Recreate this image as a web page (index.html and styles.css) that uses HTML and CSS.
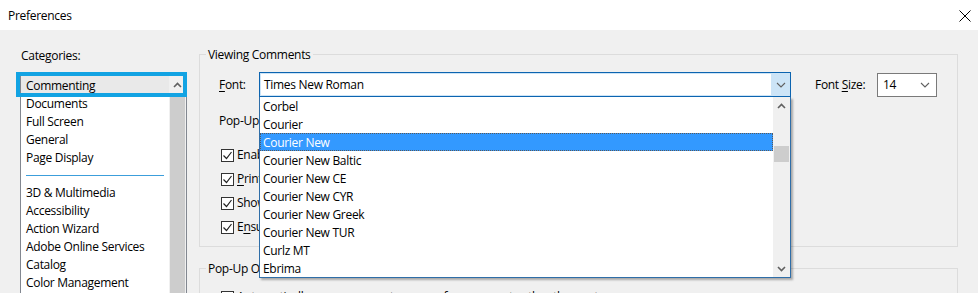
FILE: index.html
```html
<!DOCTYPE html>
<html lang="en">
<head>
    <meta charset="UTF-8">
    <meta name="viewport" content="width=device-width, initial-scale=1.0">
    <title>Preferences</title>
    <link rel="stylesheet" href="styles.css">
</head>
<body>
    <div class="window">
        <div class="titlebar">
            <span class="title">Preferences</span>
            <svg class="close" width="12" height="12" viewBox="0 0 12 12">
                <path d="M0.5 0.5 L11.5 11.5 M11.5 0.5 L0.5 11.5" stroke="#000" stroke-width="1" fill="none"/>
            </svg>
        </div>
        <div class="content">
            <div class="sidebar">
                <div class="sidebar-label">Cate<u>g</u>ories:</div>
                <div class="listbox">
                    <div class="list-items">
                        <div class="item current">Commenting</div>
                        <div class="item">Documents</div>
                        <div class="item">Full Screen</div>
                        <div class="item">General</div>
                        <div class="item">Page Display</div>
                        <div class="separator"></div>
                        <div class="item">3D &amp; Multimedia</div>
                        <div class="item">Accessibility</div>
                        <div class="item">Action Wizard</div>
                        <div class="item">Adobe Online Services</div>
                        <div class="item">Catalog</div>
                        <div class="item">Color Management</div>
                    </div>
                    <div class="list-scroll">
                        <div class="scroll-btn">
                            <svg width="9" height="6" viewBox="0 0 9 6"><path d="M1 5 L4.5 1.5 L8 5" stroke="#606060" stroke-width="1.6" fill="none"/></svg>
                        </div>
                        <div class="list-thumb"></div>
                    </div>
                    <div class="focus-ring"></div>
                </div>
            </div>

            <div class="panel">
                <fieldset class="group">
                    <legend>Viewing Comments</legend>
                    <div class="group-body">
                        <div class="font-row">
                            <span class="label font-label"><u>F</u>ont:</span>
                            <div class="combo font-combo">
                                <span class="combo-value">Times New Roman</span>
                                <span class="combo-btn">
                                    <svg width="10" height="6" viewBox="0 0 10 6"><path d="M1 1 L5 5 L9 1" stroke="#606060" stroke-width="1.1" fill="none"/></svg>
                                </span>
                                <div class="dropdown">
                                    <div class="options">
                                        <div class="option">Corbel</div>
                                        <div class="option">Courier</div>
                                        <div class="option selected">Courier New</div>
                                        <div class="option">Courier New Baltic</div>
                                        <div class="option">Courier New CE</div>
                                        <div class="option">Courier New CYR</div>
                                        <div class="option">Courier New Greek</div>
                                        <div class="option">Courier New TUR</div>
                                        <div class="option">Curlz MT</div>
                                        <div class="option">Ebrima</div>
                                    </div>
                                    <div class="drop-scroll">
                                        <div class="arrow">
                                            <svg width="9" height="6" viewBox="0 0 9 6"><path d="M1 5 L4.5 1.5 L8 5" stroke="#606060" stroke-width="1.6" fill="none"/></svg>
                                        </div>
                                        <div class="drop-thumb"></div>
                                        <div class="arrow bottom">
                                            <svg width="9" height="6" viewBox="0 0 9 6"><path d="M1 1 L4.5 4.5 L8 1" stroke="#606060" stroke-width="1.6" fill="none"/></svg>
                                        </div>
                                    </div>
                                </div>
                            </div>
                            <span class="label size-label">Font <u>S</u>ize:</span>
                            <div class="combo size-combo">
                                <span class="size-value">14</span>
                                <svg width="10" height="6" viewBox="0 0 10 6"><path d="M1 1 L5 5 L9 1" stroke="#606060" stroke-width="1.1" fill="none"/></svg>
                            </div>
                        </div>
                        <div class="opacity-row">Pop-Up Opacity:</div>
                        <div class="checks">
                            <div class="check"><span class="box"><svg width="11" height="11" viewBox="0 0 11 11"><path d="M1.5 5.5 L4.5 8.5 L9.5 2" stroke="#222" stroke-width="1.2" fill="none"/></svg></span>Enable text indicators and tooltips</div>
                            <div class="check"><span class="box"><svg width="11" height="11" viewBox="0 0 11 11"><path d="M1.5 5.5 L4.5 8.5 L9.5 2" stroke="#222" stroke-width="1.2" fill="none"/></svg></span><u>P</u>rint notes and pop-ups</div>
                            <div class="check"><span class="box"><svg width="11" height="11" viewBox="0 0 11 11"><path d="M1.5 5.5 L4.5 8.5 L9.5 2" stroke="#222" stroke-width="1.2" fill="none"/></svg></span>Show lines connecting comment markups to their pop-ups on mouse rollover</div>
                            <div class="check"><span class="box"><svg width="11" height="11" viewBox="0 0 11 11"><path d="M1.5 5.5 L4.5 8.5 L9.5 2" stroke="#222" stroke-width="1.2" fill="none"/></svg></span>E<u>n</u>sure that pop-ups are visible as the document is scrolled</div>
                        </div>
                    </div>
                </fieldset>

                <fieldset class="group second">
                    <legend>Pop-Up Open Behavior</legend>
                    <div class="group-body">
                        <div class="check"><span class="box"></span>Automatically open comment pop-ups for comments other than notes</div>
                    </div>
                </fieldset>
            </div>
        </div>
    </div>
</body>
</html>
```

FILE: styles.css
```css
html, body {
    margin: 0;
    padding: 0;
    overflow: hidden;
}
body {
    width: 978px;
    height: 293px;
    font-family: 'Segoe UI', 'Open Sans', 'Noto Sans', sans-serif;
    font-size: 12px;
    letter-spacing: -0.3px;
    line-height: 18px;
    color: #000;
    background: #f0f0f0;
}
u {
    text-decoration-thickness: 1px;
    text-underline-offset: 2px;
}

/* title bar */
.titlebar {
    height: 30px;
    background: #fff;
    display: flex;
    align-items: center;
    justify-content: space-between;
    padding: 1px 7px 0 8px;
    box-sizing: border-box;
}
.close {
    display: block;
}

.content {
    display: flex;
    height: 263px;
    overflow: hidden;
}

/* categories */
.sidebar {
    width: 167px;
    padding: 17px 0 0 20px;
    flex-shrink: 0;
}
.sidebar-label {
    padding-left: 1px;
    margin-bottom: 10px;
}
.listbox {
    position: relative;
    display: flex;
    border: 1px solid #828790;
    border-bottom: none;
    background: #fff;
    height: 230px;
}
.list-items {
    flex: 1;
    padding-top: 1px;
}
.item {
    height: 18px;
    padding-left: 5px;
    white-space: nowrap;
}
.item.current {
    background: #e9e9e9;
    margin-top: -1px;
    padding-top: 1px;
}
.separator {
    height: 17px;
    box-sizing: border-box;
    padding: 8px 5px 0 5px;
}
.separator::after {
    content: "";
    display: block;
    height: 1px;
    background: #3c9edb;
}
.list-scroll {
    width: 17px;
    display: flex;
    flex-direction: column;
    background: #f0f0f0;
}
.scroll-btn {
    height: 18px;
    display: flex;
    align-items: center;
    justify-content: center;
}
.list-thumb {
    flex: 1;
    margin: 0 1px;
    background: #cdcdcd;
}
.focus-ring {
    position: absolute;
    top: -4px;
    left: -5px;
    width: 171px;
    height: 25px;
    box-sizing: border-box;
    border: 4px solid #12a3e3;
}

/* right panel */
.panel {
    width: 759px;
    margin-left: 12px;
    padding-top: 15px;
}
.group {
    margin: 0;
    padding: 0;
    border: 1px solid #dcdcdc;
    min-width: 0;
}
.group legend {
    margin-left: 6px;
    padding: 1px 2px 0 2px;
    line-height: 17px;
}
.group-body {
    padding: 9px 0 10px 19px;
}
.group.second {
    margin-top: 12px;
}
.group.second .group-body {
    padding-top: 11px;
}

.font-row {
    display: flex;
    align-items: center;
    height: 25px;
}
.label {
    white-space: nowrap;
    padding-top: 1px;
}
.font-label {
    width: 40px;
}
.size-label {
    width: 62px;
    margin-left: 24px;
}
.combo {
    position: relative;
    box-sizing: border-box;
    display: flex;
    align-items: center;
}
.font-combo {
    width: 532px;
    height: 25px;
    border: 1px solid #0c64b0;
    background: #cce4f7;
}
.combo-value {
    flex: 1;
    align-self: stretch;
    margin: 1px 0 1px 1px;
    padding: 1px 0 0 3px;
    background: #fff;
    line-height: 20px;
}
.combo-btn {
    width: 19px;
    display: flex;
    justify-content: center;
}
.size-combo {
    width: 60px;
    height: 24px;
    border: 1px solid #7a7a7a;
    background: #fff;
    justify-content: space-between;
    padding: 1px 6px 0 5px;
}

.dropdown {
    position: absolute;
    top: 24px;
    left: -1px;
    width: 532px;
    height: 181px;
    box-sizing: border-box;
    border: 1px solid #2f6ea8;
    border-top: none;
    background: #fff;
    display: flex;
    box-shadow: 2px 2px 2px rgba(0, 0, 0, 0.3);
    z-index: 2;
}
.options {
    flex: 1;
}
.option {
    height: 18px;
    box-sizing: border-box;
    padding: 1px 0 0 3px;
    line-height: 17px;
    white-space: nowrap;
}
.option.selected {
    background: #3399ff;
    color: #fff;
    border: 1px dotted #5a5a5a;
    padding: 0 0 0 2px;
    line-height: 17px;
}
.drop-scroll {
    width: 17px;
    display: flex;
    flex-direction: column;
    background: #f0f0f0;
}
.arrow {
    height: 17px;
    display: flex;
    align-items: center;
    justify-content: center;
}
.arrow.bottom {
    margin-top: auto;
}
.drop-thumb {
    height: 16px;
    margin: 32px 1px 0 1px;
    background: #cdcdcd;
}

.opacity-row {
    margin-top: 15px;
}
.checks {
    margin-top: 16px;
    display: flex;
    flex-direction: column;
    gap: 6px;
}
.check {
    display: flex;
    align-items: center;
    white-space: nowrap;
    padding-left: 2px;
}
.box {
    width: 13px;
    height: 13px;
    box-sizing: border-box;
    border: 1px solid #333;
    background: #fff;
    margin-right: 3px;
    display: flex;
    align-items: center;
    justify-content: center;
}
.box svg {
    display: block;
}
```
